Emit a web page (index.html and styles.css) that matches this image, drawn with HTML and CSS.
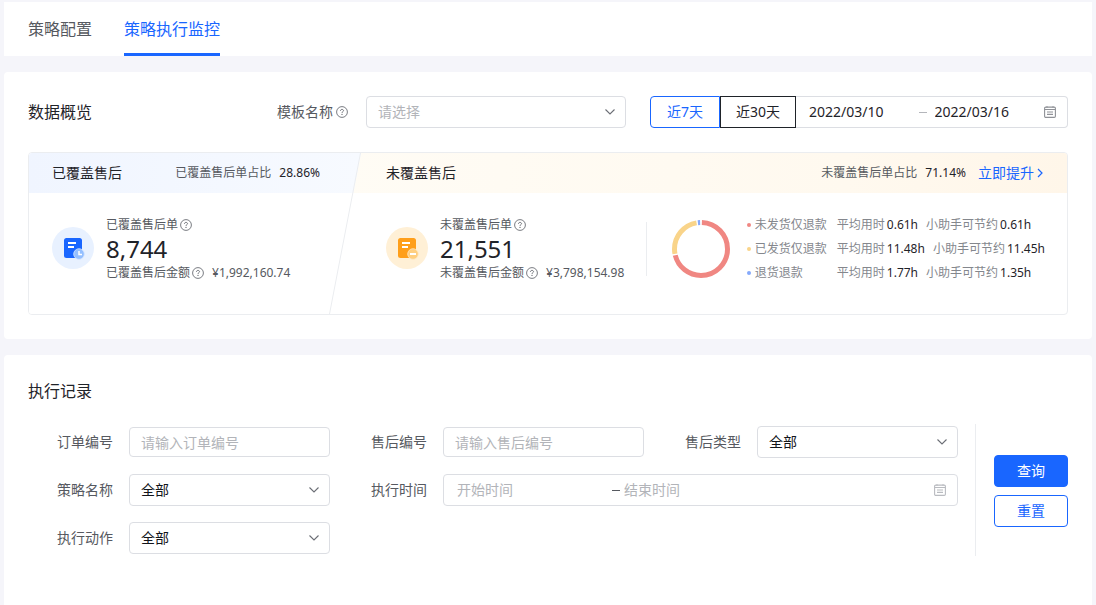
FILE: index.html
```html
<!DOCTYPE html>
<html lang="zh-CN">
<head>
<meta charset="utf-8">
<meta name="viewport" content="width=device-width, initial-scale=1">
<title>策略执行监控</title>
<link rel="stylesheet" href="styles.css">
</head>
<body>
<svg class="symbols" aria-hidden="true">
  <symbol id="help" viewBox="0 0 12 12">
    <circle cx="6" cy="6" r="5.4" fill="none" stroke="currentColor" stroke-width="0.9"/>
    <path d="M4.5 4.9C4.5 3.9 5.1 3.4 6 3.4s1.5.5 1.5 1.3C7.500 5.600 6 5.700 6 6.900" fill="none" stroke="currentColor" stroke-width="1"/>
    <circle cx="6" cy="8.400" r=".65" fill="currentColor"/>
  </symbol>
  <symbol id="chevron" viewBox="0 0 12 12">
    <path d="M1.500 3.500L6 8l4.500-4.500" fill="none" stroke="currentColor" stroke-width="1.1"/>
  </symbol>
  <symbol id="calendar" viewBox="0 0 12 12">
    <rect x=".6" y="1.100" width="10.800" height="10.300" rx="1.200" fill="none" stroke="currentColor" stroke-width="1.100"/>
    <path d="M.6 3.500h10.800" stroke="currentColor" stroke-width="1"/>
    <path d="M3 .2v1.600M9 .2v1.600" stroke="currentColor" stroke-width="1"/>
    <path d="M3 6h6M3 8.300h6" stroke="currentColor" stroke-width="1.200"/>
  </symbol>
</svg>

<nav class="tabs">
  <a class="tab" href="#config">策略配置</a>
  <a class="tab tab-active" href="#monitor" aria-current="page">策略执行监控</a>
</nav>

<main class="page">
  <section class="panel">
    <div class="panel-head">
      <h2 class="title">数据概览</h2>
      <div class="filters">
        <label class="filter-label" for="template">模板名称<svg class="help"><use href="#help"/></svg></label>
        <div class="select select-template">
          <select id="template" class="control is-empty"><option>请选择</option></select>
          <svg class="chevron"><use href="#chevron"/></svg>
        </div>
        <div class="range-group">
          <button type="button" class="range-btn range-active">近7天</button>
          <button type="button" class="range-btn">近30天</button>
          <div class="date-range">
            <input class="date" type="text" aria-label="开始日期" value="2022/03/10">
            <span class="dash dash-light"></span>
            <input class="date" type="text" aria-label="结束日期" value="2022/03/16">
            <svg class="calendar"><use href="#calendar"/></svg>
          </div>
        </div>
      </div>
    </div>

    <div class="overview">
      <section class="covered">
        <header class="card-head">
          <h3 class="card-title">已覆盖售后</h3>
          <p class="ratio">已覆盖售后单占比<span class="ratio-value">28.86%</span></p>
        </header>
        <div class="card-body">
          <svg class="badge" viewBox="0 0 42 42">
            <circle cx="21" cy="21" r="21" fill="#e8f1ff"/>
            <rect x="12" y="11" width="18" height="20" rx="2.500" fill="#1966ff"/>
            <path d="M16 16h8M16 20h6" stroke="#fff" stroke-width="2"/>
            <circle cx="27" cy="27" r="5.300" fill="#94bfff" stroke="#d6e6ff" stroke-width=".8"/>
            <path d="M27 24v3.500h3" fill="none" stroke="#fff" stroke-width="1.500"/>
          </svg>
          <div class="stat">
            <p>已覆盖售后单<svg class="help"><use href="#help"/></svg></p>
            <p class="number">8,744</p>
            <p>已覆盖售后金额<svg class="help"><use href="#help"/></svg><span class="amount">¥1,992,160.74</span></p>
          </div>
        </div>
      </section>
      <svg class="slant" viewBox="0 0 32 161" preserveAspectRatio="none"><path d="M31.500 0L.5 161" fill="none" stroke="#ebedf0"/></svg>

      <section class="uncovered">
        <header class="card-head">
          <h3 class="card-title">未覆盖售后</h3>
          <p class="ratio">未覆盖售后单占比<span class="ratio-value">71.14%</span></p>
          <a class="improve" href="#improve">立即提升<svg class="arrow" viewBox="0 0 6 10"><path d="M1 1l4 4-4 4" fill="none" stroke="currentColor" stroke-width="1.200"/></svg></a>
        </header>
        <div class="card-body">
          <svg class="badge" viewBox="0 0 42 42">
            <circle cx="21" cy="21" r="21" fill="#fff0d6"/>
            <rect x="12" y="11" width="18" height="20" rx="2.500" fill="#ff9f1a"/>
            <path d="M16 16h8M16 20h6" stroke="#fff" stroke-width="2"/>
            <circle cx="27" cy="27" r="5.300" fill="#ffcf80" stroke="#ffe9c4" stroke-width=".8"/>
            <path d="M24 27h6" stroke="#fff" stroke-width="1.800"/>
          </svg>
          <div class="stat">
            <p>未覆盖售后单<svg class="help"><use href="#help"/></svg></p>
            <p class="number">21,551</p>
            <p>未覆盖售后金额<svg class="help"><use href="#help"/></svg><span class="amount">¥3,798,154.98</span></p>
          </div>
          <div class="breakdown">
            <svg class="donut" viewBox="0 0 58 58">
              <g fill="none" stroke-width="5" transform="rotate(-90 29 29)">
                <circle cx="29" cy="29" r="26.500" pathLength="360" stroke="#f08782" stroke-dasharray="254 106" stroke-dashoffset="-2"/>
                <circle cx="29" cy="29" r="26.500" pathLength="360" stroke="#f9d48a" stroke-dasharray="91 269" stroke-dashoffset="-259"/>
                <circle cx="29" cy="29" r="26.500" pathLength="360" stroke="#85a9fb" stroke-dasharray="5 355" stroke-dashoffset="-353"/>
              </g>
            </svg>
            <ul class="legend">
              <li><i class="dot dot-red"></i><span class="kind">未发货仅退款</span><span>平均用时<b>0.61h</b></span><span>小助手可节约<b>0.61h</b></span></li>
              <li><i class="dot dot-yellow"></i><span class="kind">已发货仅退款</span><span>平均用时<b>11.48h</b></span><span>小助手可节约<b>11.45h</b></span></li>
              <li><i class="dot dot-blue"></i><span class="kind">退货退款</span><span>平均用时<b>1.77h</b></span><span>小助手可节约<b>1.35h</b></span></li>
            </ul>
          </div>
        </div>
      </section>
    </div>
  </section>

  <section class="panel panel-records">
    <h2 class="title">执行记录</h2>
    <form class="search">
      <div class="fields">
        <div class="field">
          <label for="order">订单编号</label>
          <input id="order" class="control control-text" type="text" placeholder="请输入订单编号">
        </div>
        <div class="field">
          <label for="after">售后编号</label>
          <input id="after" class="control control-text" type="text" placeholder="请输入售后编号">
        </div>
        <div class="field">
          <label for="type">售后类型</label>
          <div class="select">
            <select id="type" class="control"><option>全部</option></select>
            <svg class="chevron"><use href="#chevron"/></svg>
          </div>
        </div>
        <div class="field">
          <label for="strategy">策略名称</label>
          <div class="select">
            <select id="strategy" class="control"><option>全部</option></select>
            <svg class="chevron"><use href="#chevron"/></svg>
          </div>
        </div>
        <div class="field field-wide">
          <label for="start">执行时间</label>
          <div class="time-range">
            <input id="start" class="date" type="text" placeholder="开始时间">
            <span class="dash"></span>
            <input class="date date-end" type="text" aria-label="结束时间" placeholder="结束时间">
            <svg class="calendar calendar-light"><use href="#calendar"/></svg>
          </div>
        </div>
        <div class="field">
          <label for="action">执行动作</label>
          <div class="select">
            <select id="action" class="control"><option>全部</option></select>
            <svg class="chevron"><use href="#chevron"/></svg>
          </div>
        </div>
      </div>
      <div class="actions">
        <button type="submit" class="btn btn-primary">查询</button>
        <button type="reset" class="btn">重置</button>
      </div>
    </form>
  </section>
</main>
</body>
</html>
```

FILE: styles.css
```css
* {
  box-sizing: border-box;
}

body {
  display: flex;
  flex-direction: column;
  min-height: 100vh;
  margin: 0;
  padding: 2px 4px 0;
  background: #f5f5fa;
  color: #1f2329;
  font-family: "Noto Sans", "Noto Sans CJK SC", sans-serif;
  font-size: 14px;
  line-height: 24px;
  font-weight: 400;
}

h2, h3, p, ul {
  margin: 0;
  padding: 0;
  font-weight: inherit;
}

a {
  text-decoration: none;
}

input, select, button {
  margin: 0;
  font: inherit;
}

.symbols {
  position: absolute;
  width: 0;
  height: 0;
}

.tabs {
  display: flex;
  gap: 32px;
  padding: 0 24px;
  background: #fff;
}

.tab {
  padding: 15px 0 12px;
  border-bottom: 3px solid transparent;
  color: #565960;
  font-size: 16px;
}

.tab-active {
  border-color: #1966ff;
  color: #1966ff;
}

.page {
  display: flex;
  flex: 1;
  flex-direction: column;
  gap: 16px;
  padding-top: 16px;
}

.panel {
  padding: 24px;
  border-radius: 4px;
  background: #fff;
}

.panel-records {
  flex: 1;
  border-radius: 4px 4px 0 0;
}

.title {
  font-size: 16px;
}

.panel-head {
  display: flex;
  align-items: center;
  justify-content: space-between;
  margin-bottom: 24px;
}

.filters {
  display: flex;
  align-items: center;
}

.filter-label {
  display: flex;
  align-items: center;
  gap: 1px;
  margin-right: 18px;
  color: #565960;
}

.help {
  flex: none;
  width: 12px;
  height: 12px;
  margin-left: 2px;
  color: #6b6e75;
}

.select {
  position: relative;
  flex: 1;
  min-width: 0;
}

.select-template {
  flex: none;
  width: 260px;
  margin-right: 24px;
}

.control {
  display: block;
  width: 100%;
  height: 32px;
  padding: 0 11px;
  border: 1px solid #dcdee3;
  border-radius: 4px;
  background: #fff;
  color: #12141a;
  appearance: none;
}

.control-text {
  height: 30px;
}

.is-empty, ::placeholder {
  color: #b2b4b9;
  opacity: 1;
}

.chevron {
  position: absolute;
  top: 10px;
  right: 10px;
  width: 12px;
  height: 12px;
  color: #6b6e75;
  pointer-events: none;
}

.range-group {
  display: flex;
}

.range-btn {
  height: 32px;
  padding: 0 15px;
  border: 1px solid #1f2329;
  background: #fff;
  color: #1f2329;
}

.range-active {
  padding: 0 16px;
  border-color: #1966ff;
  border-radius: 4px 0 0 4px;
  color: #1966ff;
}

.date-range, .time-range {
  display: flex;
  align-items: center;
  height: 32px;
  padding: 0 11px 0 13px;
  border: 1px solid #dcdee3;
  border-radius: 4px;
}

.date-range {
  width: 272px;
  border-left: 0;
  border-radius: 0 4px 4px 0;
}

.time-range {
  flex: 1;
  min-width: 0;
}

.date {
  flex: 1;
  min-width: 0;
  padding: 0;
  border: 0;
  background: transparent;
  color: #1f2329;
}

.date-end {
  flex: 2;
}

.dash {
  width: 8px;
  height: 1px;
  margin-right: 4px;
  background: #565960;
}

.dash-light {
  margin-right: 8px;
  background: #b4b6bb;
}

.calendar {
  flex: none;
  width: 12px;
  height: 12px;
  color: #8f9197;
}

.calendar-light {
  color: #b9bbc0;
}

.overview {
  position: relative;
  display: flex;
  border: 1px solid #ebedf0;
  border-radius: 4px;
  overflow: hidden;
}

.covered {
  z-index: 1;
  flex: none;
  width: 332px;
  background: #fff;
  clip-path: polygon(0 0, 100% 0, calc(100% - 31px) 100%, 0 100%);
}

.slant {
  position: absolute;
  z-index: 2;
  top: 0;
  left: 300px;
  width: 32px;
  height: 100%;
}

.uncovered {
  flex: 1;
  min-width: 0;
  margin-left: -32px;
}

.card-head {
  display: flex;
  align-items: center;
  height: 40px;
  padding: 0 24px 0 23px;
}

.card-title {
  font-size: 14px;
}

.covered .card-head {
  justify-content: space-between;
  padding-right: 41px;
  background: linear-gradient(90deg, #f0f5ff, #f7faff);
}

.uncovered .card-head {
  padding-left: 57px;
  background: linear-gradient(90deg, #fffcf5, #fff9ef 70%, #fff6e9);
}

.uncovered .ratio {
  margin-left: auto;
}

.ratio {
  color: #565960;
  font-size: 12px;
}

.ratio-value {
  margin-left: 8px;
  color: #1f2329;
}

.improve {
  display: flex;
  align-items: center;
  gap: 3px;
  margin-left: 12px;
  color: #1966ff;
}

.arrow {
  width: 6px;
  height: 10px;
}

.card-body {
  display: flex;
  gap: 12px;
  padding: 20px 22px 29px 23px;
  font-size: 12px;
}

.uncovered .card-body {
  padding-left: 57px;
}

.badge {
  flex: none;
  width: 42px;
  height: 42px;
  margin-top: 14px;
}

.stat {
  color: #565960;
  white-space: nowrap;
}

.stat p {
  display: flex;
  align-items: center;
}

.stat .number {
  color: #1f2329;
  font-size: 24px;
}

.amount {
  margin-left: 8px;
}

.breakdown {
  display: flex;
  align-items: center;
  gap: 17px;
  margin-left: auto;
}

.breakdown::before {
  width: 1px;
  height: 54px;
  margin-right: 8px;
  background: #ebedf0;
  content: "";
}

.donut {
  flex: none;
  width: 58px;
  height: 58px;
}

.legend {
  color: #84878d;
  list-style: none;
  white-space: nowrap;
}

.legend li {
  display: flex;
  align-items: center;
  gap: 8px;
}

.legend b {
  margin-left: 2px;
  color: #1f2329;
  font-weight: inherit;
}

.dot {
  width: 4px;
  height: 4px;
  margin-right: -4px;
  border-radius: 50%;
}

.dot-red {
  background: #f08782;
}

.dot-yellow {
  background: #f9d48a;
}

.dot-blue {
  background: #85a9fb;
}

.kind {
  width: 74px;
}

.search {
  display: flex;
  margin-top: 21px;
}

.fields {
  display: grid;
  flex: 1;
  grid-template-columns: repeat(3, 1fr);
  gap: 16px 41px;
  padding: 2px 17px 2px 29px;
  border-right: 1px solid #ebedf0;
}

.field {
  display: flex;
  align-items: center;
  gap: 16px;
  min-width: 0;
  height: 32px;
  color: #565960;
}

.field label {
  flex: none;
}

.field-wide {
  grid-column: span 2;
}

.field .control-text {
  flex: 1;
  min-width: 0;
}

.actions {
  display: flex;
  flex-direction: column;
  justify-content: center;
  gap: 8px;
  padding: 2px 0 0 18px;
}

.btn {
  width: 74px;
  height: 32px;
  border: 1px solid #1966ff;
  border-radius: 4px;
  background: #fff;
  color: #1966ff;
}

.btn-primary {
  background: #1966ff;
  color: #fff;
}
```
